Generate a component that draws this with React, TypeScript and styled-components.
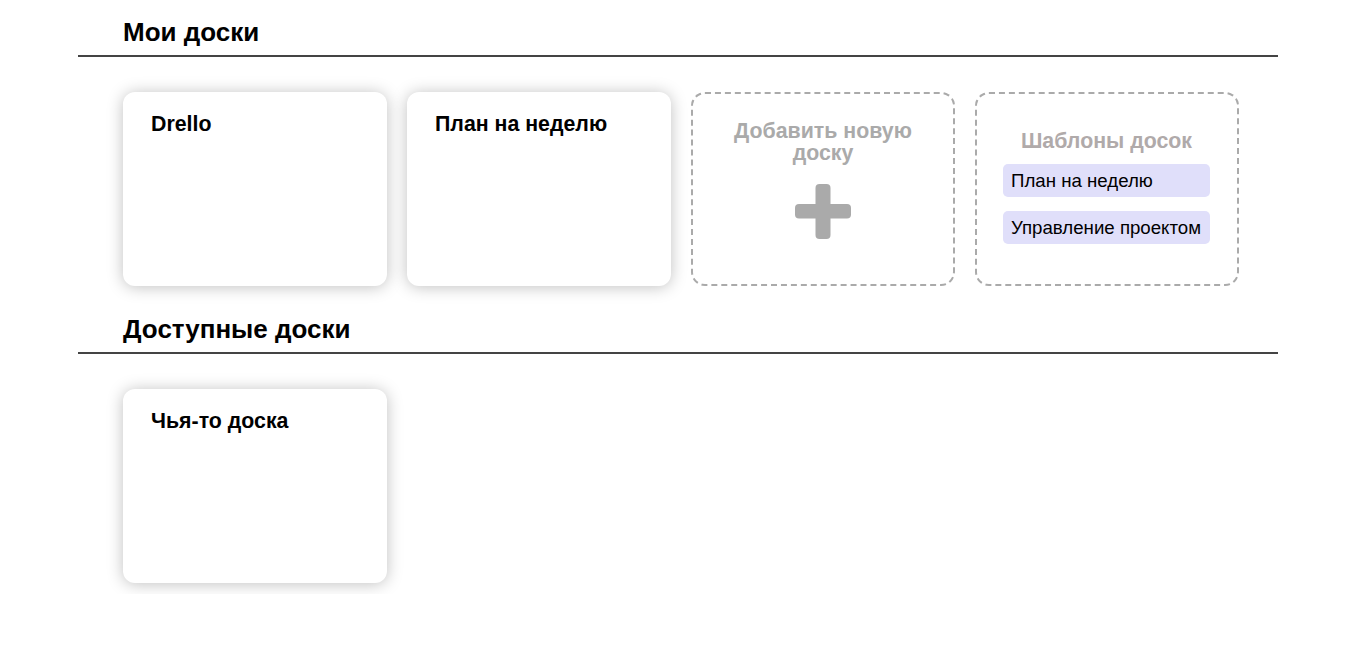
import styled, { createGlobalStyle } from 'styled-components';

const GlobalStyle = createGlobalStyle`
  body {
    margin: 0;
    background: #ffffff;
    font-family: 'Liberation Sans', Arial, sans-serif;
    color: #000000;
  }
`;

const myBoards = ['Drello', 'План на неделю'];
const sharedBoards = ['Чья-то доска'];
const templates = ['План на неделю', 'Управление проектом'];

const PlusIcon = () => (
  <svg width="56" height="56" viewBox="0 0 56 56">
    <rect x="20.5" y="0" width="15" height="55" rx="4" fill="#aaaaaa" />
    <rect x="0" y="20" width="56" height="14.5" rx="4" fill="#aaaaaa" />
  </svg>
);

export default function App() {
  return (
    <>
      <GlobalStyle />
      <Page>
        <Section>
          <Heading>Мои доски</Heading>
          <BoardRow>
            {myBoards.map((name) => (
              <BoardCard key={name}>
                <BoardTitle>{name}</BoardTitle>
              </BoardCard>
            ))}
            <DashedCard>
              <AddContent>
                <AddTitle>Добавить новую доску</AddTitle>
                <PlusIcon />
              </AddContent>
            </DashedCard>
            <DashedCard>
              <TemplateContent>
                <TemplateTitle>Шаблоны досок</TemplateTitle>
                {templates.map((t) => (
                  <TemplateItem key={t}>{t}</TemplateItem>
                ))}
              </TemplateContent>
            </DashedCard>
          </BoardRow>
        </Section>
        <Section>
          <Heading>Доступные доски</Heading>
          <BoardRow>
            {sharedBoards.map((name) => (
              <BoardCard key={name}>
                <BoardTitle>{name}</BoardTitle>
              </BoardCard>
            ))}
          </BoardRow>
        </Section>
      </Page>
    </>
  );
}

const Page = styled.div`
  width: 1200px;
  margin-left: 78px;
  display: flex;
  flex-direction: column;
`;

const Section = styled.section`
  display: flex;
  flex-direction: column;
  padding-top: 18px;
`;

const Heading = styled.h2`
  margin: 0;
  padding: 0 0 9px 45px;
  font-size: 26px;
  line-height: 28px;
  font-weight: 700;
  border-bottom: 2px solid #444444;
`;

const BoardRow = styled.div`
  display: flex;
  gap: 20px;
  padding: 35px 45px 11px;
`;

const BoardCard = styled.div`
  box-sizing: border-box;
  flex-shrink: 0;
  width: 264px;
  height: 194px;
  padding: 20px 28px;
  background: #ffffff;
  border-radius: 12px;
  box-shadow: 0 1px 16px rgba(0, 0, 0, 0.25);
`;

const BoardTitle = styled.div`
  font-size: 21.33px;
  line-height: 24px;
  font-weight: 700;
`;

const DashedCard = styled.div`
  box-sizing: border-box;
  flex-shrink: 0;
  width: 264px;
  height: 194px;
  border: 2px dashed #aaaaaa;
  border-radius: 14px;
  display: flex;
  align-items: center;
  justify-content: center;
`;

const AddContent = styled.div`
  display: flex;
  flex-direction: column;
  align-items: center;
  gap: 20px;
  margin-bottom: 18px;
`;

const AddTitle = styled.div`
  width: 200px;
  text-align: center;
  color: #aaaaaa;
  font-size: 21.33px;
  line-height: 22px;
  font-weight: 700;
`;

const TemplateContent = styled.div`
  display: flex;
  flex-direction: column;
  align-items: stretch;
  gap: 14px;
  width: 207px;
  margin: 0 1px 4px 0;
`;

const TemplateTitle = styled.div`
  text-align: center;
  color: #b0aaaa;
  font-size: 21.33px;
  line-height: 22px;
  font-weight: 700;
  margin-bottom: -2px;
`;

const TemplateItem = styled.div`
  height: 33px;
  padding: 0 8px;
  display: flex;
  align-items: center;
  background: #e0dffa;
  border-radius: 5px;
  font-size: 18.67px;
  white-space: nowrap;
`;
